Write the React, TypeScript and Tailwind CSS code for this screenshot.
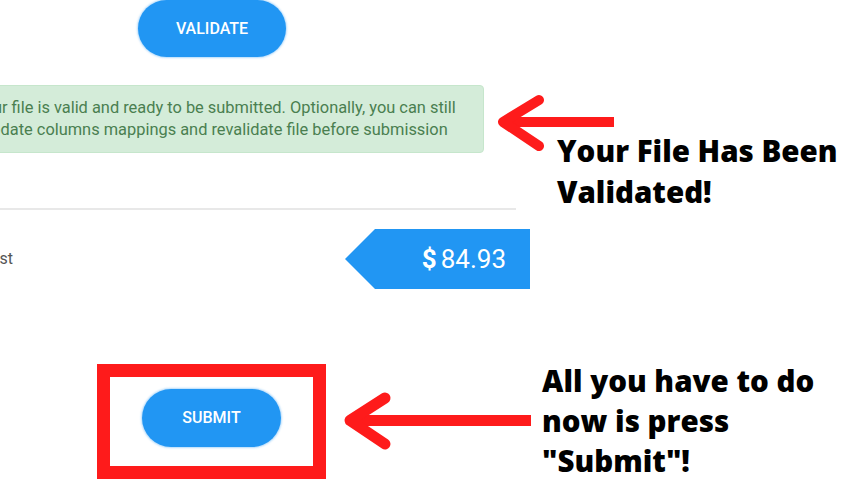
export default function App() {
    return (
        <div className="relative w-[847px] h-[490px] overflow-hidden bg-white flex flex-row">
            {/* screenshot of the upload form */}
            <div className="w-[530px] h-full overflow-hidden flex flex-col font-['Roboto',sans-serif]">
                <button className="ml-[138px] w-[148px] h-[57px] rounded-full bg-[#2196f3] text-white text-[16px] font-medium shadow-[0_0_2px_1px_rgba(33,150,243,0.35)]">
                    VALIDATE
                </button>
                <div className="mt-[28px] -ml-[54px] w-[538px] h-[68px] shrink-0 rounded-[4px] border border-[#c6e6cc] bg-[#d4ecd9] text-[#4a7f50] text-[16.4px] leading-[22px] text-center flex items-center justify-center">
                    <p className="whitespace-nowrap">
                        Your file is valid and ready to be submitted. Optionally, you can still
                        <br />
                        update columns mappings and revalidate file before submission
                    </p>
                </div>
                <div className="mt-[55px] w-[516px] h-[2px] bg-[#e8e8e8] shrink-0"></div>
                <div className="mt-[19px] h-[60px] flex flex-row items-center justify-between shrink-0">
                    <span className="-ml-[20px] text-[16px] text-[#555555]">Cost</span>
                    <div className="w-[185px] h-[60px] bg-[#2196f3] text-white flex items-center justify-end pr-[24px] [clip-path:polygon(30px_0,100%_0,100%_100%,30px_100%,0_50%)]">
                        <span className="text-[26px] font-bold mr-[4px]">$</span>
                        <span className="text-[26px]">84.93</span>
                    </div>
                </div>
                <div className="mt-[75px] ml-[97px] w-[229px] h-[115px] shrink-0 border-[13px] border-[#fe1b1b] flex items-center justify-center pb-[7px]">
                    <button className="w-[139px] h-[58px] rounded-full bg-[#2196f3] text-white text-[16px] font-medium shadow-[0_0_2px_1px_rgba(33,150,243,0.35)]">
                        SUBMIT
                    </button>
                </div>
            </div>

            {/* annotations */}
            <div className="flex-1 flex flex-col font-['Open_Sans',sans-serif] font-extrabold text-black text-[29.5px] leading-[41px] whitespace-nowrap">
                <p className="mt-[130px] ml-[27px]">
                    Your File Has Been
                    <br />
                    Validated!
                </p>
                <p className="mt-[149px] ml-[12px] leading-[40px]">
                    All you have to do
                    <br />
                    now is press
                    <br />
                    "Submit"!
                </p>
            </div>

            <svg className="absolute inset-0 pointer-events-none" width="847" height="490" viewBox="0 0 847 490" fill="none">
                <path d="M614 122 H504" stroke="#fe1b1b" strokeWidth="10" />
                <path d="M539 100 L503 122 L539 146" stroke="#fe1b1b" strokeWidth="10" strokeLinecap="round" strokeLinejoin="round" />
                <path d="M531 420.5 H352" stroke="#fe1b1b" strokeWidth="11" />
                <path d="M385 398 L350 420.5 L385 444" stroke="#fe1b1b" strokeWidth="11" strokeLinecap="round" strokeLinejoin="round" />
            </svg>
        </div>
    )
}
